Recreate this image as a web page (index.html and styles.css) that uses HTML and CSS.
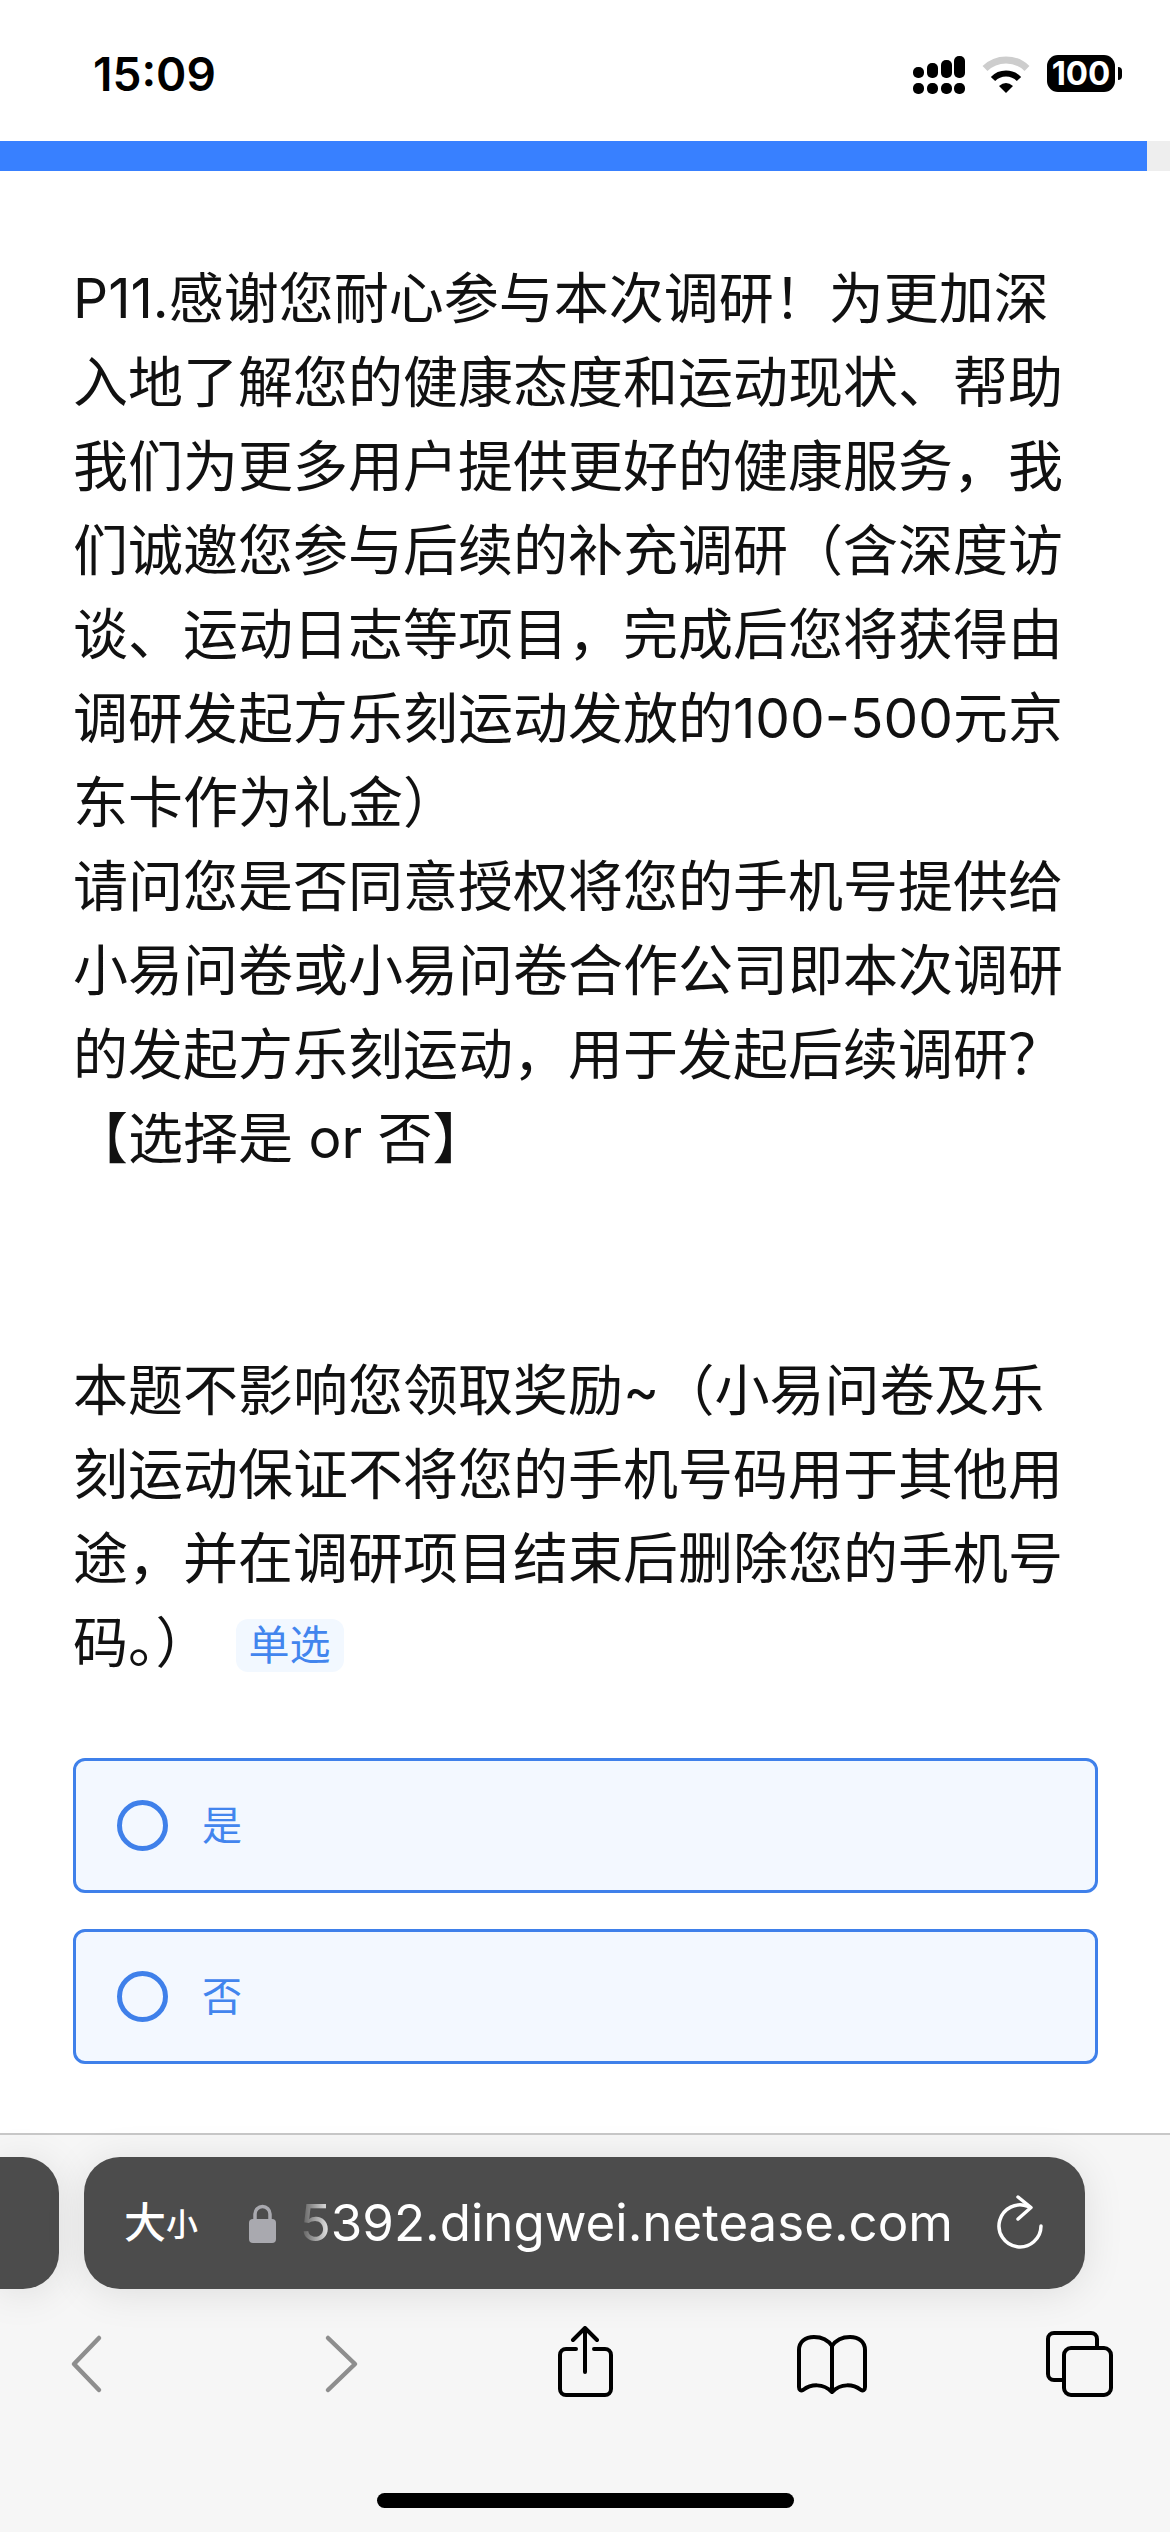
FILE: index.html
```html
<!DOCTYPE html>
<html lang="zh-CN">
<head>
    <meta charset="UTF-8">
    <meta name="viewport" content="width=device-width, initial-scale=1.0">
    <title>问卷调研</title>
    <link rel="stylesheet" href="styles.css">
</head>
<body>
    <div class="page">
        <header class="status-bar">
            <span class="time">15:09</span>
            <div class="status-icons">
                <svg class="signal" width="52" height="38" viewBox="0 0 52 38">
                    <rect x="0" y="11" width="11" height="11" rx="5"/>
                    <rect x="14" y="7" width="11" height="15" rx="5"/>
                    <rect x="28" y="4" width="11" height="18" rx="5"/>
                    <rect x="41" y="0" width="11" height="22" rx="5"/>
                    <rect x="0" y="27" width="11" height="11" rx="5"/>
                    <rect x="14" y="27" width="11" height="11" rx="5"/>
                    <rect x="28" y="27" width="11" height="11" rx="5"/>
                    <rect x="41" y="27" width="11" height="11" rx="5"/>
                </svg>
                <svg class="wifi" width="48" height="38" viewBox="0 0 48 38">
                    <path d="M3 13.5A30 30 0 0 1 45 13.5" fill="none" stroke="#cdcdcd" stroke-width="7"/>
                    <path d="M11 24A18 18 0 0 1 37 24" fill="none" stroke="#000" stroke-width="6"/>
                    <path d="M17 31Q24 25 31 31L24 38Z" fill="#000"/>
                </svg>
                <div class="battery"><span class="battery-level">100</span></div>
            </div>
        </header>

        <div class="progress"><div class="progress-fill"></div></div>

        <main class="survey">
            <p class="question">P11.感谢您耐心参与本次调研！为更加深入地了解您的健康态度和运动现状、帮助我们为更多用户提供更好的健康服务，我们诚邀您参与后续的补充调研（含深度访谈、运动日志等项目，完成后您将获得由调研发起方乐刻运动发放的100-500元京东卡作为礼金）<br>请问您是否同意授权将您的手机号提供给小易问卷或小易问卷合作公司即本次调研的发起方乐刻运动，用于发起后续调研？<br>【选择是 or 否】<br><br><br>本题不影响您领取奖励~（小易问卷及乐刻运动保证不将您的手机号码用于其他用途，并在调研项目结束后删除您的手机号码。）<span class="tag">单选</span></p>

            <div class="options">
                <label class="option"><span class="radio"></span><span class="option-text">是</span></label>
                <label class="option"><span class="radio"></span><span class="option-text">否</span></label>
            </div>
        </main>

        <footer class="toolbar">
            <div class="address-row">
                <div class="tab-peek"></div>
                <div class="address-bar">
                    <span class="text-size"><span class="big">大</span><span class="small">小</span></span>
                    <svg class="lock" width="27" height="39" viewBox="0 0 27 39">
                        <path d="M6 17V10a7.5 7.5 0 0 1 15 0V17" fill="none" stroke="#a9a9af" stroke-width="3.5"/>
                        <rect x="0" y="15" width="27" height="24" rx="4" fill="#a9a9af"/>
                    </svg>
                    <div class="url"><span class="url-text">485392.dingwei.netease.com</span></div>
                    <svg class="reload" width="48" height="56" viewBox="0 0 48 56">
                        <path d="M44 31A21 21 0 1 1 31 11.5" fill="none" stroke="#fff" stroke-width="3.5" stroke-linecap="round"/>
                        <path d="M21 2L34 12.500L21 24" fill="none" stroke="#fff" stroke-width="3.500" stroke-linecap="round" stroke-linejoin="round"/>
                    </svg>
                </div>
            </div>

            <nav class="nav-icons">
                <svg width="72" height="72" viewBox="0 0 72 72">
                    <path d="M49 12L24 38L49 64" fill="none" stroke="#8e8e8e" stroke-width="4.500" stroke-linecap="round" stroke-linejoin="round"/>
                </svg>
                <svg width="72" height="72" viewBox="0 0 72 72">
                    <path d="M23 12L50 38L23 64" fill="none" stroke="#8e8e8e" stroke-width="4.500" stroke-linecap="round" stroke-linejoin="round"/>
                </svg>
                <svg width="72" height="72" viewBox="0 0 72 72">
                    <g fill="none" stroke="#000" stroke-width="4" stroke-linecap="round" stroke-linejoin="round">
                        <path d="M27 23H17a6 6 0 0 0-6 6V63a6 6 0 0 0 6 6H56a6 6 0 0 0 6-6V29a6 6 0 0 0-6-6H45"/>
                        <path d="M36 46V2M24 14L36 2L48 14"/>
                    </g>
                </svg>
                <svg width="72" height="72" viewBox="0 0 72 72">
                    <path d="M36 20C32 14 26 11 18 11C9 11 3 16 3 24V61C3 64 5 65 7 64C15 58 27 57 36 66C45 57 57 58 65 64C67 65 69 64 69 61V24C69 16 63 11 54 11C46 11 40 14 36 20ZM36 20V64" fill="none" stroke="#000" stroke-width="4" stroke-linejoin="round"/>
                </svg>
                <svg width="72" height="72" viewBox="0 0 72 72">
                    <path d="M54 20V13a6 6 0 0 0-6-6H11a6 6 0 0 0-6 6V48a6 6 0 0 0 6 6H19" fill="none" stroke="#000" stroke-width="4"/>
                    <rect x="21" y="22" width="47" height="47" rx="7" fill="none" stroke="#000" stroke-width="4"/>
                </svg>
            </nav>

            <div class="home-indicator"></div>
        </footer>
    </div>
</body>
</html>
```

FILE: styles.css
```css
* {
    margin: 0;
    padding: 0;
    box-sizing: border-box;
    font-family: Inter, 'Noto Sans CJK SC', sans-serif;
}

body {
    background: white;
}

.page {
    width: 1170px;
    height: 2532px;
    display: flex;
    flex-direction: column;
    overflow: hidden;
}

/* status bar */
.status-bar {
    height: 141px;
    flex-shrink: 0;
    display: flex;
    justify-content: space-between;
    align-items: flex-start;
    padding: 55px 55px 0 93px;
}

.time {
    font-size: 46px;
    line-height: 38px;
    font-weight: 600;
    color: #000;
}

.status-icons {
    display: flex;
    align-items: flex-start;
}

.signal {
    margin-top: 1px;
    margin-right: 17px;
}

.wifi {
    margin-right: 17px;
}

.battery {
    width: 68px;
    height: 37px;
    background: #000;
    border-radius: 11px;
    display: flex;
    justify-content: center;
    align-items: center;
    position: relative;
}

.battery::after {
    content: '';
    position: absolute;
    right: -7px;
    top: 12px;
    width: 4px;
    height: 13px;
    background: #000;
    border-radius: 0 7px 7px 0;
}

.battery-level {
    color: white;
    font-size: 33px;
    line-height: 37px;
    font-weight: 700;
}

/* progress */
.progress {
    height: 30px;
    flex-shrink: 0;
    background: #eeeeee;
}

.progress-fill {
    width: 1147px;
    height: 100%;
    background: #3880ff;
}

/* question */
.survey {
    flex: 1;
    padding: 85px 72px 0 73px;
}

.question {
    font-size: 55px;
    line-height: 84px;
    color: #111;
}

.tag {
    display: inline-block;
    margin-left: 25px;
    padding: 0 13px;
    height: 53px;
    line-height: 53px;
    font-size: 41px;
    color: #4285ee;
    background: #f2f8ff;
    border-radius: 12px;
    vertical-align: 2px;
}

.options {
    margin-top: 74px;
    display: flex;
    flex-direction: column;
    gap: 36px;
}

.option {
    height: 135px;
    display: flex;
    align-items: center;
    gap: 34px;
    padding-left: 41px;
    background: #f3f8ff;
    border: 3px solid #3f80ea;
    border-radius: 12px;
}

.radio {
    width: 51px;
    height: 51px;
    border: 5px solid #3f80ea;
    border-radius: 50%;
}

.option-text {
    font-size: 40px;
    line-height: 50px;
    color: #4285ee;
}

/* browser toolbar */
.toolbar {
    height: 399px;
    flex-shrink: 0;
    background: #f6f6f6;
    border-top: 2px solid #c8c8c8;
}

.address-row {
    display: flex;
    gap: 25px;
    padding-top: 22px;
}

.tab-peek {
    width: 59px;
    height: 132px;
    background: #4c4c4c;
    border-radius: 0 36px 36px 0;
    box-shadow: 0 4px 40px rgba(0, 0, 0, 0.1);
}

.address-bar {
    width: 1001px;
    height: 132px;
    display: flex;
    align-items: center;
    padding-left: 40px;
    background: #4c4c4c;
    border-radius: 36px;
    box-shadow: 0 4px 40px rgba(0, 0, 0, 0.1);
}

.text-size {
    display: flex;
    align-items: flex-end;
    width: 73px;
    color: white;
    font-weight: 500;
}

.big {
    font-size: 42px;
    line-height: 46px;
}

.small {
    font-size: 32px;
    line-height: 42px;
}

.lock {
    margin-left: 52px;
}

.url {
    width: 655px;
    margin-left: 22px;
    display: flex;
    justify-content: flex-end;
    overflow: hidden;
    -webkit-mask-image: linear-gradient(to right, transparent 0, #000 36px);
    mask-image: linear-gradient(to right, transparent 0, #000 36px);
}

.url-text {
    flex-shrink: 0;
    font-size: 51px;
    line-height: 66px;
    color: white;
    white-space: nowrap;
}

.reload {
    margin-left: 44px;
}

.nav-icons {
    display: grid;
    grid-template-columns: 255px 244px 247px 247px 72px;
    padding: 37px 0 0 50px;
}

.home-indicator {
    width: 417px;
    height: 15px;
    margin: 95px 0 0 377px;
    background: #000;
    border-radius: 8px;
}
```
